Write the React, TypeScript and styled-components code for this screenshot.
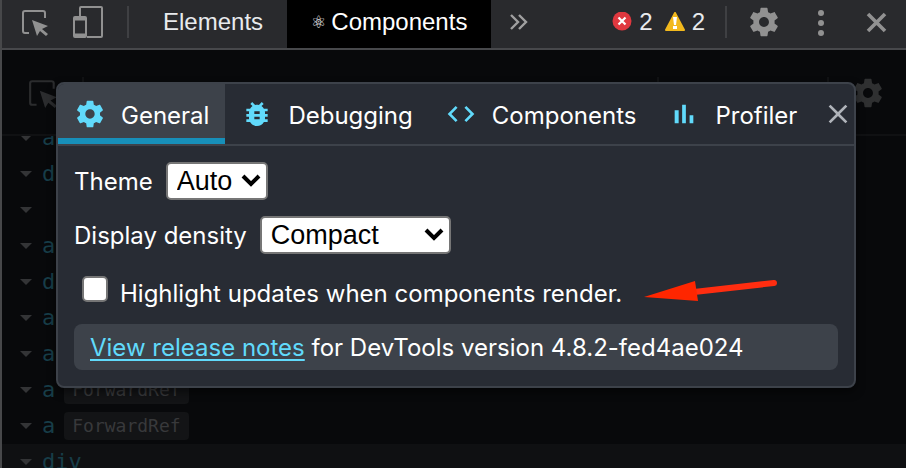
import React from "react";
import styled, { createGlobalStyle } from "styled-components";
import { MdBugReport, MdClose, MdCode } from "react-icons/md";

const GlobalStyle = createGlobalStyle`
  * { box-sizing: border-box; }
  body { margin: 0; background: #08090b; }
  button, select, input { font: inherit; margin: 0; }
`;

const Page = styled.div`
  display: flex;
  flex-direction: column;
  height: 100vh;
  overflow: hidden;
  border-left: 2px solid #47484a;
  background: #08090b;
  font-family: Inter, "Noto Sans", sans-serif;
`;

const Toolbar = styled.header`
  display: flex;
  flex: none;
  height: 50px;
  border-bottom: 2px solid #47484b;
  background: #292a2d;
  color: #e8eaed;
  font: 24px/44px "Liberation Sans", Arial, sans-serif;
`;

const ToolGroup = styled.div`
  display: flex;
  align-items: center;
  height: 44px;
`;

const LeftTools = styled(ToolGroup)`
  gap: 23px;
  padding-left: 19px;
`;

const RightTools = styled(ToolGroup)`
  gap: 20px;
  margin-left: auto;
  padding-right: 17px;
`;

const IconButton = styled.button`
  display: flex;
  align-items: center;
  justify-content: center;
  padding: 0;
  border: 0;
  background: none;
  color: #919191;
  cursor: pointer;
`;

const Divider = styled.span<{ $dim?: boolean }>`
  width: 2px;
  height: 32px;
  background: ${(p) => (p.$dim ? "#111214" : "#3f4043")};
`;

const PanelTab = styled.button<{ $active?: boolean }>`
  display: flex;
  align-items: center;
  gap: 5px;
  height: 48px;
  padding: 0 24px 4px;
  border: 0;
  background: ${(p) => (p.$active ? "#000" : "transparent")};
  color: ${(p) => (p.$active ? "#fff" : "inherit")};
  cursor: pointer;
`;

const PanelTabs = styled.nav`
  display: flex;
  margin-left: 10px;
`;

const Atom = styled.span`
  font: 17px/24px "DejaVu Sans", sans-serif;
`;

const MoreButton = styled(IconButton)`
  width: 56px;
  height: 44px;
`;

const Counters = styled.div`
  display: flex;
  align-items: center;
  gap: 12px;
`;

const Counter = styled.span`
  display: flex;
  align-items: center;
  gap: 7px;
`;

const Body = styled.main`
  position: relative;
  display: flex;
  flex: 1;
  flex-direction: column;
  min-height: 0;
`;

const TreeToolbar = styled.div`
  display: flex;
  flex: none;
  align-items: center;
  height: 86px;
  padding: 2px 21px 0 26px;
  border-bottom: 2px solid #101113;
`;

const TreeSearch = styled.div`
  display: flex;
  flex: 1;
  justify-content: space-between;
  padding: 0 168px 0 24px;
`;

const TreeEnd = styled.div`
  display: flex;
  align-items: center;
  gap: 22px;
`;

const TreeViewport = styled.div`
  flex: 1;
  min-height: 0;
  overflow: hidden;
`;

const Tree = styled.ul`
  margin: -16px 0 0;
  padding: 0;
  list-style: none;
  font: 22px/36px "DejaVu Sans Mono", monospace;
`;

const TreeRow = styled.li<{ $selected?: boolean }>`
  display: flex;
  align-items: center;
  gap: 9px;
  height: 36px;
  padding-left: 17px;
  background: ${(p) => (p.$selected ? "#0f1012" : "transparent")};
  color: #173d48;
`;

const Badge = styled.span`
  padding: 0 8px;
  border-radius: 4px;
  background: #131416;
  color: #38393b;
  font-size: 18px;
  line-height: 28px;
`;

const Overlay = styled.div`
  position: absolute;
  inset: 0;
  padding: 32px 50px 0 54px;
`;

const Dialog = styled.section`
  overflow: hidden;
  border: 2px solid #3d424a;
  border-radius: 8px;
  background: #282c34;
  color: #fff;
  font-size: 24px;
  box-shadow: 0 4px 8px rgba(0, 0, 0, 0.5);
`;

const TabBar = styled.div`
  display: flex;
  height: 62px;
  border-bottom: 2px solid #3d424a;
`;

const Tab = styled.button<{ $active?: boolean }>`
  display: flex;
  align-items: center;
  gap: 15px;
  height: 60px;
  padding: 6px 16px 0;
  border: 0;
  border-bottom: 6px solid ${(p) => (p.$active ? "#178fb9" : "transparent")};
  background: ${(p) => (p.$active ? "#3d424a" : "transparent")};
  color: #fff;
  white-space: nowrap;
  cursor: pointer;

  svg {
    flex: none;
    color: #61dafb;
  }
`;

const TabLabel = styled.span`
  padding-top: 2px;
`;

const CloseButton = styled(IconButton)`
  margin-left: auto;
  color: #afb3b9;
`;

const Settings = styled.div`
  display: flex;
  flex-direction: column;
  gap: 16px;
  padding: 16px;
`;

const Field = styled.div`
  display: flex;
  align-items: center;
  gap: 13px;
  height: 38px;
`;

const SelectBox = styled.div`
  position: relative;

  svg {
    position: absolute;
    top: 12px;
    right: 7px;
    pointer-events: none;
  }
`;

const Select = styled.select`
  display: block;
  height: 38px;
  padding: 0 30px 0 9px;
  border: 2px solid #767676;
  border-radius: 5px;
  appearance: none;
  background: #fff;
  color: #000;
  font: 27px/32px "Liberation Sans", Arial, sans-serif;
`;

const CheckField = styled(Field)`
  gap: 12px;
  padding-left: 8px;
`;

const Checkbox = styled.input`
  flex: none;
  width: 26px;
  height: 26px;
  border: 2px solid #767676;
  border-radius: 5px;
  appearance: none;
  background: #fff;

  &:checked {
    background: #61dafb;
  }
`;

const CheckLabel = styled.label`
  padding-top: 8px;
  white-space: nowrap;
`;

const Pointer = styled.svg`
  flex: none;
  margin-left: 10px;
`;

const ReleaseNotes = styled.div`
  padding: 9px 16px 7px;
  border-radius: 8px;
  background: #3d424a;
  line-height: 30px;
`;

const Link = styled.a`
  color: #61dafb;
  text-decoration-thickness: 2px;
  text-underline-offset: 3px;
`;

function InspectIcon({ color, size }: { color: string; size: number }) {
  return (
    <svg width={size} height={size} viewBox="0 0 28 28" aria-hidden="true">
      <path d="M8 25H4a2 2 0 0 1-2-2V5a2 2 0 0 1 2-2h18a2 2 0 0 1 2 2v5" fill="none" stroke={color} strokeWidth="2" />
      <path d="M11 12l16 6-6 3 6 5-2 2-6-5-3 5z" fill={color} />
    </svg>
  );
}

function DeviceIcon() {
  return (
    <svg width="32" height="34" viewBox="0 0 32 34" aria-hidden="true" fill="none" stroke="#919191" strokeWidth="2">
      <path d="M8 11V3a1 1 0 0 1 1-1h20a1 1 0 0 1 1 1v28a1 1 0 0 1-1 1H15" />
      <rect x="2" y="12" width="12" height="20" rx="1" />
      <path d="M2 14h12M2 30h12" strokeWidth="3" />
    </svg>
  );
}

function GearIcon({ size, color }: { size: number; color?: string }) {
  return (
    <svg width={size} height={size} viewBox="0 0 24 24" fill={color ?? "currentColor"} aria-hidden="true">
      <path d="M19.43 12.98c.04-.32.07-.64.07-.98s-.03-.66-.07-.98l2.11-1.65c.19-.15.24-.42.12-.64l-2-3.46c-.12-.22-.39-.3-.61-.22l-2.49 1c-.52-.4-1.08-.73-1.69-.98l-.38-2.65C14.46 2.18 14.25 2 14 2h-4c-.25 0-.46.18-.49.42l-.38 2.65c-.61.25-1.17.59-1.69.98l-2.49-1c-.23-.09-.49 0-.61.22l-2 3.46c-.13.22-.07.49.12.64l2.11 1.65c-.04.32-.07.65-.07.98s.03.66.07.98l-2.11 1.65c-.19.15-.24.42-.12.64l2 3.46c.12.22.39.3.61.22l2.49-1c.52.4 1.08.73 1.69.98l.38 2.65c.03.24.24.42.49.42h4c.25 0 .46-.18.49-.42l.38-2.65c.61-.25 1.17-.59 1.69-.98l2.49 1c.23.09.49 0 .61-.22l2-3.46c.12-.22.07-.49-.12-.64l-2.11-1.65zM12 15.5c-1.93 0-3.5-1.57-3.5-3.5s1.57-3.5 3.5-3.5 3.5 1.57 3.5 3.5-1.57 3.5-3.5 3.5z" />
    </svg>
  );
}

function ChartIcon() {
  return (
    <svg width="32" height="32" viewBox="0 0 24 24" fill="currentColor" aria-hidden="true">
      <path d="M5 9.2h3V19H5zM10.6 5h2.8v14h-2.8zM16.2 13H19v6h-2.8z" />
    </svg>
  );
}

function SelectArrow() {
  return (
    <svg width="20" height="14" viewBox="0 0 20 14" aria-hidden="true">
      <path d="M2 2l8 8 8-8" fill="none" stroke="#000" strokeWidth="4" />
    </svg>
  );
}

const treeRows = [
  { name: "a" },
  { name: "div" },
  { name: "" },
  { name: "a" },
  { name: "div" },
  { name: "a" },
  { name: "a" },
  { name: "a", badge: "ForwardRef" },
  { name: "a", badge: "ForwardRef" },
  { name: "div", selected: true },
];

export default function App() {
  return (
    <Page>
      <GlobalStyle />
      <Toolbar>
        <LeftTools>
          <IconButton aria-label="Inspect element">
            <InspectIcon color="#919191" size={28} />
          </IconButton>
          <IconButton aria-label="Toggle device toolbar">
            <DeviceIcon />
          </IconButton>
          <Divider />
        </LeftTools>
        <PanelTabs>
          <PanelTab>Elements</PanelTab>
          <PanelTab $active>
            <Atom>⚛</Atom>
            <span>Components</span>
          </PanelTab>
        </PanelTabs>
        <MoreButton aria-label="More tabs">
          <svg width="20" height="18" viewBox="0 0 20 18" aria-hidden="true">
            <path d="M2 2l7 7-7 7M10 2l7 7-7 7" fill="none" stroke="#a0a0a0" strokeWidth="2.4" />
          </svg>
        </MoreButton>
        <RightTools>
          <Counters>
            <Counter>
              <svg width="20" height="20" viewBox="0 0 20 20" role="img" aria-label="Errors">
                <circle cx="10" cy="9" r="9.5" fill="#e0383f" />
                <path d="M6.5 5.5l7 7M13.5 5.5l-7 7" stroke="#fff" strokeWidth="2.2" />
              </svg>
              <span>2</span>
            </Counter>
            <Counter>
              <svg width="20" height="20" viewBox="0 0 20 20" role="img" aria-label="Warnings">
                <path d="M10 1l9 17H1z" fill="#f2b91d" stroke="#f2b91d" strokeWidth="2" strokeLinejoin="round" />
                <path d="M8 5h4l-1 8H9zM8 14h4v3H8z" fill="#fff" />
              </svg>
              <span>2</span>
            </Counter>
          </Counters>
          <Divider />
          <IconButton aria-label="Settings">
            <GearIcon size={34} />
          </IconButton>
          <IconButton aria-label="Customize">
            <svg width="42" height="28" viewBox="0 0 42 28" fill="#919191" aria-hidden="true">
              <circle cx="20" cy="5" r="3" />
              <circle cx="20" cy="15" r="3" />
              <circle cx="20" cy="25" r="3" />
            </svg>
          </IconButton>
          <IconButton aria-label="Close DevTools">
            <svg width="26" height="26" viewBox="0 0 26 26" aria-hidden="true">
              <path d="M5 5l17 17M22 5L5 22" stroke="#919191" strokeWidth="3.6" />
            </svg>
          </IconButton>
        </RightTools>
      </Toolbar>
      <Body>
        <TreeToolbar>
          <InspectIcon color="#2b2c2e" size={30} />
          <TreeSearch>
            <Divider $dim />
            <Divider $dim />
          </TreeSearch>
          <TreeEnd>
            <Divider $dim />
            <GearIcon size={34} color="#2f3031" />
          </TreeEnd>
        </TreeToolbar>
        <TreeViewport>
          <Tree>
            {treeRows.map((row, i) => (
              <TreeRow key={i} $selected={row.selected}>
                <svg width="14" height="8" viewBox="0 0 14 8" aria-hidden="true">
                  <path d="M1 1h12L7 7z" fill="#333436" />
                </svg>
                <span>{row.name}</span>
                {row.badge && <Badge>{row.badge}</Badge>}
              </TreeRow>
            ))}
          </Tree>
        </TreeViewport>
        <Overlay>
          <Dialog role="dialog" aria-label="Settings">
            <TabBar>
              <Tab $active>
                <GearIcon size={32} />
                <TabLabel>General</TabLabel>
              </Tab>
              <Tab>
                <MdBugReport size={32} />
                <TabLabel>Debugging</TabLabel>
              </Tab>
              <Tab>
                <MdCode size={32} />
                <TabLabel>Components</TabLabel>
              </Tab>
              <Tab>
                <ChartIcon />
                <TabLabel>Profiler</TabLabel>
              </Tab>
              <CloseButton aria-label="Close settings">
                <MdClose size={32} />
              </CloseButton>
            </TabBar>
            <Settings>
              <Field>
                <label htmlFor="theme">Theme</label>
                <SelectBox>
                  <Select id="theme" defaultValue="Auto">
                    <option>Auto</option>
                    <option>Light</option>
                    <option>Dark</option>
                  </Select>
                  <SelectArrow />
                </SelectBox>
              </Field>
              <Field>
                <label htmlFor="density">Display density</label>
                <SelectBox>
                  <Select id="density" defaultValue="Compact">
                    <option>Compact</option>
                    <option>Comfortable</option>
                  </Select>
                  <SelectArrow />
                </SelectBox>
              </Field>
              <CheckField>
                <Checkbox type="checkbox" id="highlight" />
                <CheckLabel htmlFor="highlight">Highlight updates when components render.</CheckLabel>
                <Pointer width="134" height="24" viewBox="0 0 134 24" aria-hidden="true">
                  <path d="M50 15L130 6" stroke="#ff2d10" strokeWidth="6" strokeLinecap="round" />
                  <path d="M0 20L51 4l3 20z" fill="#ff2600" />
                </Pointer>
              </CheckField>
              <ReleaseNotes>
                <Link href="#release-notes">View release notes</Link> for DevTools version 4.8.2-fed4ae024
              </ReleaseNotes>
            </Settings>
          </Dialog>
        </Overlay>
      </Body>
    </Page>
  );
}
